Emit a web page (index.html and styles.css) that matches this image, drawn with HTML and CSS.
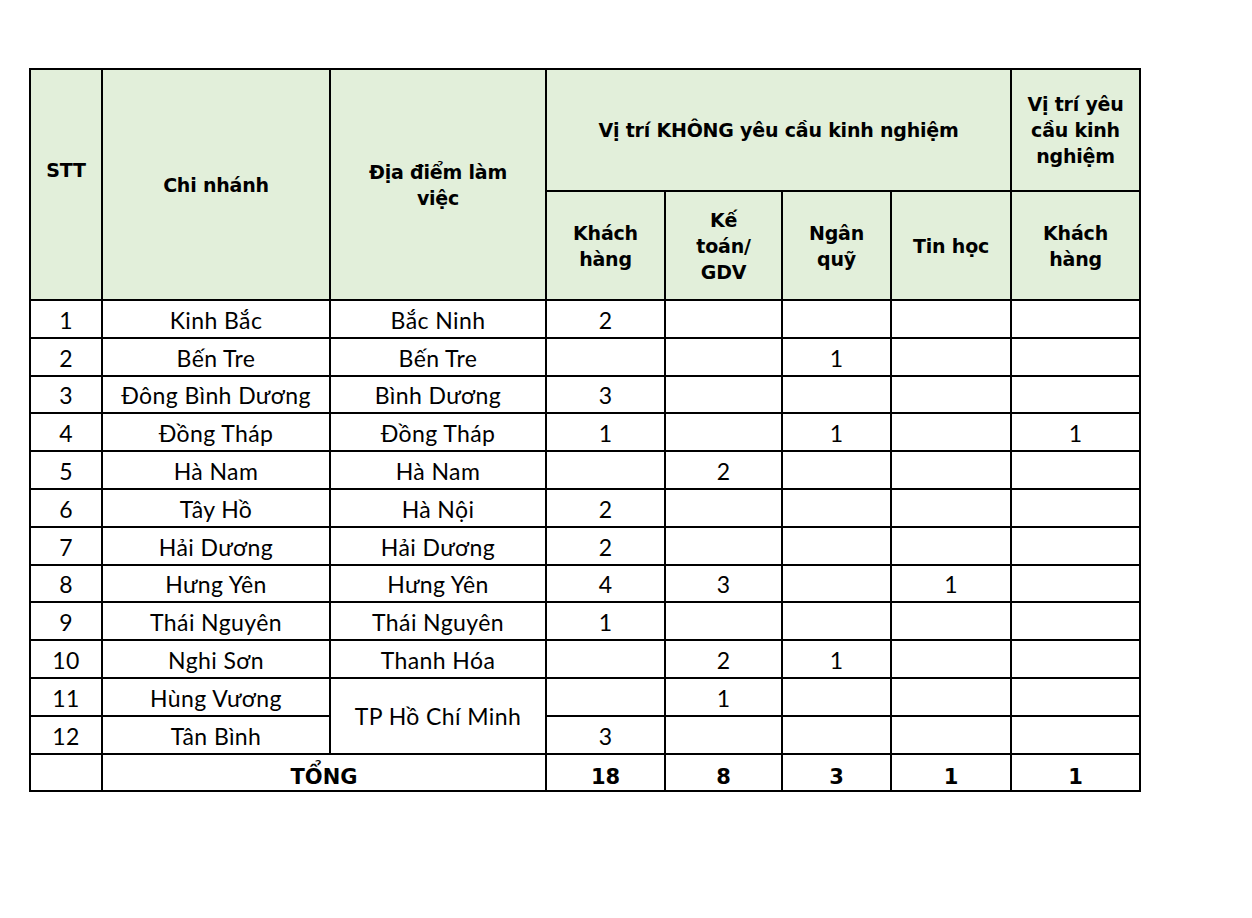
FILE: index.html
```html
<!DOCTYPE html>
<html lang="vi">
<head>
<meta charset="utf-8">
<title>Bảng tuyển dụng</title>
<link rel="stylesheet" href="styles.css">
</head>
<body>
<table class="grid">
  <colgroup>
    <col class="c-stt"><col class="c-cn"><col class="c-dd"><col class="c-kh"><col class="c-kt"><col class="c-nq"><col class="c-th"><col class="c-kh2">
  </colgroup>
  <thead>
    <tr class="h1">
      <th rowspan="2" class="stt-h">STT</th>
      <th rowspan="2">Chi nhánh</th>
      <th rowspan="2">Địa điểm làm<br>việc</th>
      <th colspan="4">Vị trí KHÔNG yêu cầu kinh nghiệm</th>
      <th>Vị trí yêu<br>cầu kinh<br>nghiệm</th>
    </tr>
    <tr class="h2">
      <th>Khách<br>hàng</th>
      <th>Kế<br>toán/<br>GDV</th>
      <th>Ngân<br>quỹ</th>
      <th>Tin học</th>
      <th>Khách<br>hàng</th>
    </tr>
  </thead>
  <tbody>
    <tr><td>1</td><td>Kinh Bắc</td><td>Bắc Ninh</td><td>2</td><td></td><td></td><td></td><td></td></tr>
    <tr><td>2</td><td>Bến Tre</td><td>Bến Tre</td><td></td><td></td><td>1</td><td></td><td></td></tr>
    <tr><td>3</td><td>Đông Bình Dương</td><td>Bình Dương</td><td>3</td><td></td><td></td><td></td><td></td></tr>
    <tr><td>4</td><td>Đồng Tháp</td><td>Đồng Tháp</td><td>1</td><td></td><td>1</td><td></td><td>1</td></tr>
    <tr><td>5</td><td>Hà Nam</td><td>Hà Nam</td><td></td><td>2</td><td></td><td></td><td></td></tr>
    <tr><td>6</td><td>Tây Hồ</td><td>Hà Nội</td><td>2</td><td></td><td></td><td></td><td></td></tr>
    <tr><td>7</td><td>Hải Dương</td><td>Hải Dương</td><td>2</td><td></td><td></td><td></td><td></td></tr>
    <tr><td>8</td><td>Hưng Yên</td><td>Hưng Yên</td><td>4</td><td>3</td><td></td><td>1</td><td></td></tr>
    <tr><td>9</td><td>Thái Nguyên</td><td>Thái Nguyên</td><td>1</td><td></td><td></td><td></td><td></td></tr>
    <tr><td>10</td><td>Nghi Sơn</td><td>Thanh Hóa</td><td></td><td>2</td><td>1</td><td></td><td></td></tr>
    <tr><td>11</td><td>Hùng Vương</td><td rowspan="2" class="merged">TP Hồ Chí Minh</td><td></td><td>1</td><td></td><td></td><td></td></tr>
    <tr><td>12</td><td>Tân Bình</td><td>3</td><td></td><td></td><td></td><td></td></tr>
    <tr class="total"><td></td><td colspan="2">TỔNG</td><td>18</td><td>8</td><td>3</td><td>1</td><td>1</td></tr>
  </tbody>
</table>
</body>
</html>
```
FILE: styles.css
```css
html, body {
  margin: 0;
  padding: 0;
  background: #ffffff;
}
body {
  padding: 68px 0 0 29px;
}
.grid {
  border-collapse: collapse;
  table-layout: fixed;
  width: 1110px;
  color: #000;
}
.c-stt { width: 72px; }
.c-cn { width: 228px; }
.c-dd { width: 216px; }
.c-kh { width: 119px; }
.c-kt { width: 117px; }
.c-nq { width: 109px; }
.c-th { width: 120px; }
.c-kh2 { width: 129px; }

.grid th, .grid td {
  border: 2px solid #000;
  text-align: center;
  padding: 0;
}
.grid th {
  background: #e2efda;
  font-family: "DejaVu Sans", "Noto Sans", sans-serif;
  font-weight: bold;
  font-size: 19px;
  line-height: 26px;
  letter-spacing: -0.2px;
  vertical-align: middle;
}
.h1 { height: 122px; }
.h2 { height: 109px; }
.grid th.stt-h { padding-bottom: 30px; }
.grid tbody tr { height: 37.8px; }
.grid td {
  font-family: "Lato", "Open Sans", sans-serif;
  font-size: 23px;
  letter-spacing: 0.4px;
  line-height: 26px;
  vertical-align: bottom;
  padding-bottom: 4px;
  padding-top: 0;
}
.grid td.merged {
  vertical-align: middle;
  padding-bottom: 0;
}
.total td {
  font-family: "DejaVu Sans", "Noto Sans", sans-serif;
  font-weight: bold;
  font-size: 21px;
  letter-spacing: 0;
  padding-bottom: 0;
}
```
